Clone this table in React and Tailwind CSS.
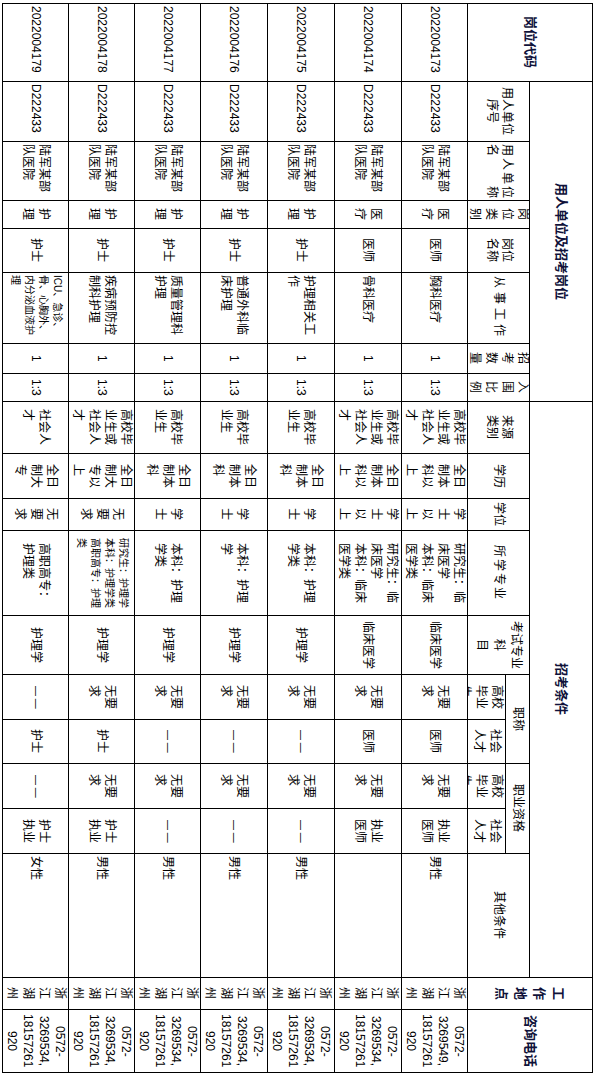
const HEAD = 'flex items-center justify-center bg-white overflow-hidden text-[12px] leading-[15px]'
const BIG = 'flex items-center justify-center bg-white overflow-hidden text-[13px] font-bold leading-[19px] text-[#10123a]'

const L = (...lines) => lines
const D = '— —'

const rows = [
  ['2022004173', 'D222433', L('陆军某部', '队医院'), L('医', '疗'), '医师', '胸科医疗', '1', '1:3', L('高校毕', '业生或', '社会人', '才'), L('全日', '制本', '科以', '上'), L('学', '士', '以', '上'), L('研究生：临', '床医学', '本科：临床', '医学类'), '临床医学', L('无要', '求'), '医师', L('无要', '求'), L('执业', '医师'), '男性', L('浙', '江', '湖', '州'), L('0572-', '3269549,', '18157261', '920')],
  ['2022004174', 'D222433', L('陆军某部', '队医院'), L('医', '疗'), '医师', '骨科医疗', '1', '1:3', L('高校毕', '业生或', '社会人', '才'), L('全日', '制本', '科以', '上'), L('学', '士', '以', '上'), L('研究生：临', '床医学', '本科：临床', '医学类'), '临床医学', L('无要', '求'), '医师', L('无要', '求'), L('执业', '医师'), '', L('浙', '江', '湖', '州'), L('0572-', '3269534,', '18157261', '920')],
  ['2022004175', 'D222433', L('陆军某部', '队医院'), L('护', '理'), '护士', L('护理相关工', '作'), '1', '1:3', L('高校毕', '业生'), L('全日', '制本', '科'), L('学', '士'), L('本科：护理', '学类'), '护理学', L('无要', '求'), D, L('无要', '求'), D, '男性', L('浙', '江', '湖', '州'), L('0572-', '3269534,', '18157261', '920')],
  ['2022004176', 'D222433', L('陆军某部', '队医院'), L('护', '理'), '护士', L('普通外科临', '床护理'), '1', '1:3', L('高校毕', '业生'), L('全日', '制本', '科'), L('学', '士'), L('本科：护理', '学'), '护理学', L('无要', '求'), D, L('无要', '求'), D, '男性', L('浙', '江', '湖', '州'), L('0572-', '3269534,', '18157261', '920')],
  ['2022004177', 'D222433', L('陆军某部', '队医院'), L('护', '理'), '护士', L('质量管理科', '护理'), '1', '1:3', L('高校毕', '业生'), L('全日', '制本', '科'), L('学', '士'), L('本科：护理', '学类'), '护理学', L('无要', '求'), D, L('无要', '求'), D, '男性', L('浙', '江', '湖', '州'), L('0572-', '3269534,', '18157261', '920')],
  ['2022004178', 'D222433', L('陆军某部', '队医院'), L('护', '理'), '护士', L('疾病预防控', '制科护理'), '1', '1:3', L('高校毕', '业生或', '社会人', '才'), L('全日', '制大', '专以', '上'), L('无', '要', '求'), { small: true, lines: ['研究生：护理学', '本科：护理学类', '高职高专：护理', '类'] }, '护理学', L('无要', '求'), '护士', L('无要', '求'), L('护士', '执业'), '男性', L('浙', '江', '湖', '州'), L('0572-', '3269534,', '18157261', '920')],
  ['2022004179', 'D222433', L('陆军某部', '队医院'), L('护', '理'), '护士', { small: true, lines: ['ICU、急诊、', '骨、心胸外、', '内分泌血液护', '理'] }, '1', '1:3', L('社会人', '才'), L('全日', '制大', '专'), L('无', '要', '求'), L('高职高专：', '护理类'), '护理学', D, '护士', D, L('护士', '执业'), '女性', L('浙', '江', '湖', '州'), L('0572-', '3269534,', '18157261', '920')],
]

// per column: s = start, c = centered block, t = centered lines
const ALIGN = ['s', 's', 's', 'c', 'c', 's', 'c', 'c', 'c', 'c', 'c', 'c', 'c', 'c', 'c', 'c', 'c', 's', 'c', 't']
const ALIGN_CLS = {
  s: 'justify-start ps-[2px] text-left',
  c: 'justify-center text-left',
  t: 'justify-center text-center',
}

function Lines({ lines }) {
  return lines.map((l, i) => (
    <span key={i}>
      {l}
      {i < lines.length - 1 && <br />}
    </span>
  ))
}

function DataCell({ value, col }) {
  const small = value && typeof value === 'object' && !Array.isArray(value)
  const lines = small ? value.lines : Array.isArray(value) ? value : [value]
  let size = 'text-[12px] leading-[16px]'
  if (small) size = 'text-[10px] leading-[14px]'
  if (value === D) size = 'text-[10px] leading-[16px]'
  return (
    <div className={`flex items-center bg-white overflow-hidden ${ALIGN_CLS[ALIGN[col]]}`}>
      <div className={`whitespace-nowrap ${size}`}>
        <Lines lines={lines} />
      </div>
    </div>
  )
}

export default function App() {
  return (
    <div className="bg-white min-h-[1076px] pt-[3px] pl-[2px]">
      <div
        className="grid bg-black p-px gap-px w-[591px] h-[1070px] text-black [writing-mode:vertical-rl] [text-orientation:sideways] [font-family:'Liberation_Sans','Noto_Sans_CJK_SC',sans-serif] grid-cols-[77px_59px_58px_27px_43px_70px_29px_27px_51px_44px_31px_84px_58px_44px_43px_44px_44px_123px_31px_62px] grid-rows-[62px_23px_37px_65px_66px_66px_66px_65px_65px_65px]"
      >
        {/* header band */}
        <div className={`${BIG} col-start-1 row-start-1 row-span-3`}>岗位代码</div>
        <div className={`${BIG} col-start-2 col-span-7 row-start-1`}>用人单位及招考岗位</div>
        <div className={`${BIG} col-start-9 col-span-10 row-start-1`}>招考条件</div>
        <div className={`${BIG} col-start-19 row-start-1 row-span-3`}>
          <div className="text-center"><Lines lines={['工', '作', '地', '点']} /></div>
        </div>
        <div className={`${BIG} col-start-20 row-start-1 row-span-3`}>咨询电话</div>

        <div className={`${HEAD} col-start-2 row-start-2 row-span-2`}>
          <div className="text-center"><Lines lines={['用人单位', '序号']} /></div>
        </div>
        <div className={`${HEAD} col-start-3 row-start-2 row-span-2 px-[2px]`}>
          <div className="flex-1 text-justify [text-align-last:justify]"><Lines lines={['用人单位', '名称']} /></div>
        </div>
        <div className={`${HEAD} col-start-4 row-start-2 row-span-2 leading-[16px]`}>
          <div className="text-center"><Lines lines={['岗', '位', '类', '别']} /></div>
        </div>
        <div className={`${HEAD} col-start-5 row-start-2 row-span-2`}>
          <div className="text-center"><Lines lines={['岗位', '名称']} /></div>
        </div>
        <div className={`${HEAD} col-start-6 row-start-2 row-span-2 tracking-[4px]`}>从事工作</div>
        <div className={`${HEAD} col-start-7 row-start-2 row-span-2 leading-[16px]`}>
          <div className="text-center"><Lines lines={['招', '考', '数', '量']} /></div>
        </div>
        <div className={`${HEAD} col-start-8 row-start-2 row-span-2 leading-[16px]`}>
          <div className="text-center"><Lines lines={['入', '围', '比', '例']} /></div>
        </div>
        <div className={`${HEAD} col-start-9 row-start-2 row-span-2`}>
          <div className="text-center"><Lines lines={['来源', '类别']} /></div>
        </div>
        <div className={`${HEAD} col-start-10 row-start-2 row-span-2`}>学历</div>
        <div className={`${HEAD} col-start-11 row-start-2 row-span-2`}>学位</div>
        <div className={`${HEAD} col-start-12 row-start-2 row-span-2 tracking-[2px]`}>所学专业</div>
        <div className={`${HEAD} col-start-13 row-start-2 row-span-2 leading-[17px]`}>
          <div className="text-center"><Lines lines={['考试专业', '科', '目']} /></div>
        </div>
        <div className={`${HEAD} col-start-14 col-span-2 row-start-2`}>职称</div>
        <div className={`${HEAD} col-start-16 col-span-2 row-start-2`}>职业资格</div>
        <div className={`${HEAD} col-start-18 row-start-2 row-span-2`}>其他条件</div>

        {/* the third line of 高校毕业生 is cut by the cell edge, as in the source sheet */}
        <div className="flex items-start justify-center bg-white overflow-hidden text-[12px] leading-[16px] col-start-14 row-start-3">
          <div className="whitespace-nowrap"><Lines lines={['高校', '毕业', '生']} /></div>
        </div>
        <div className={`${HEAD} col-start-15 row-start-3 leading-[16px]`}>
          <div><Lines lines={['社会', '人才']} /></div>
        </div>
        <div className="flex items-start justify-center bg-white overflow-hidden text-[12px] leading-[16px] col-start-16 row-start-3">
          <div className="whitespace-nowrap"><Lines lines={['高校', '毕业', '生']} /></div>
        </div>
        <div className={`${HEAD} col-start-17 row-start-3 leading-[16px]`}>
          <div><Lines lines={['社会', '人才']} /></div>
        </div>

        {/* data rows, auto-placed after the header band */}
        {rows.map((r, ri) =>
          r.map((v, ci) => <DataCell key={`${ri}-${ci}`} value={v} col={ci} />)
        )}
      </div>
    </div>
  )
}
